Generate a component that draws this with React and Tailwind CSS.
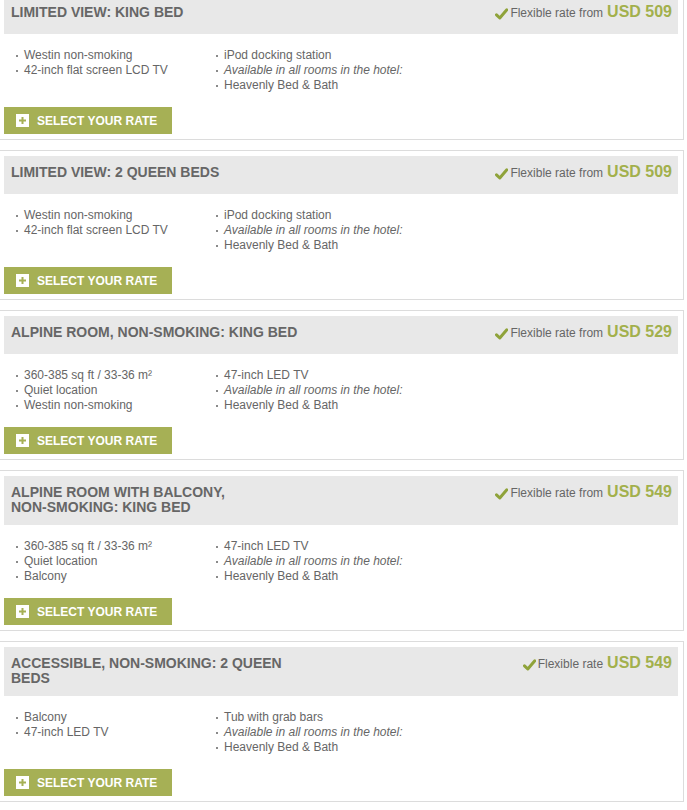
import React from 'react';

const AVAIL = 'Available in all rooms in the hotel:';

const rooms = [
  {
    title: 'LIMITED VIEW: KING BED',
    rate: 'Flexible rate from',
    price: 'USD 509',
    left: ['Westin non-smoking', '42-inch flat screen LCD TV'],
    right: ['iPod docking station', AVAIL, 'Heavenly Bed & Bath'],
  },
  {
    title: 'LIMITED VIEW: 2 QUEEN BEDS',
    rate: 'Flexible rate from',
    price: 'USD 509',
    left: ['Westin non-smoking', '42-inch flat screen LCD TV'],
    right: ['iPod docking station', AVAIL, 'Heavenly Bed & Bath'],
  },
  {
    title: 'ALPINE ROOM, NON-SMOKING: KING BED',
    rate: 'Flexible rate from',
    price: 'USD 529',
    left: ['360-385 sq ft / 33-36 m²', 'Quiet location', 'Westin non-smoking'],
    right: ['47-inch LED TV', AVAIL, 'Heavenly Bed & Bath'],
  },
  {
    title: 'ALPINE ROOM WITH BALCONY, NON-SMOKING: KING BED',
    rate: 'Flexible rate from',
    price: 'USD 549',
    left: ['360-385 sq ft / 33-36 m²', 'Quiet location', 'Balcony'],
    right: ['47-inch LED TV', AVAIL, 'Heavenly Bed & Bath'],
  },
  {
    title: 'ACCESSIBLE, NON-SMOKING: 2 QUEEN BEDS',
    rate: 'Flexible rate',
    price: 'USD 549',
    left: ['Balcony', '47-inch LED TV'],
    right: ['Tub with grab bars', AVAIL, 'Heavenly Bed & Bath'],
  },
];

function Check() {
  return (
    <svg width="13" height="12" viewBox="0 0 13 12" className="mr-[2px] self-center translate-y-[1px]">
      <path d="M1.5 6.8 L4.8 10 L11.8 1.8" fill="none" stroke="#8fa33a" strokeWidth="3" strokeLinecap="round" strokeLinejoin="round" />
    </svg>
  );
}

function Feature({ text }) {
  const italic = text === AVAIL;
  return (
    <li className="flex items-baseline h-[15px] leading-[15px]">
      <span className="w-[2px] h-[2px] bg-[#8a8a8a] mr-[6px] shrink-0 -translate-y-[2px]" />
      <span className={italic ? 'italic' : ''}>{text}</span>
    </li>
  );
}

// keep hyphenated words together, like the original page
function Title({ text }) {
  const words = text.split(' ');
  return (
    <h2 className="max-w-[300px] text-[14px] leading-[15px] font-bold text-[#666]">
      {words.map((w, i) => (
        <React.Fragment key={i}>
          <span className="whitespace-nowrap">{w}</span>
          {i < words.length - 1 ? ' ' : ''}
        </React.Fragment>
      ))}
    </h2>
  );
}

function RoomCard({ room }) {
  return (
    <div className="border border-[#dcdcdc] p-[5px] bg-white">
      {/* header */}
      <div className="bg-[#e8e8e8] flex items-baseline justify-between pl-[7px] pr-[6px] pt-[5px] pb-[10px]">
        <Title text={room.title} />
        <div className="flex items-baseline leading-[21px]">
          <Check />
          <span className="text-[12px] text-[#666]">{room.rate}</span>
          <span className="ml-[4px] text-[16px] font-bold text-[#a2b04c]">{room.price}</span>
        </div>
      </div>

      {/* features */}
      <div className="mt-[14px] pl-[12px] grid grid-cols-[200px_1fr] text-[12px] text-[#666]">
        <ul>
          {room.left.map((t) => (
            <Feature key={t} text={t} />
          ))}
        </ul>
        <ul>
          {room.right.map((t) => (
            <Feature key={t} text={t} />
          ))}
        </ul>
      </div>

      <button className="mt-[14px] w-[168px] h-[27px] bg-[#a6b055] flex items-center pl-[12px] text-white text-[12px] font-bold">
        <span className="w-[13px] h-[13px] bg-white flex items-center justify-center mr-[8px]">
          <svg width="9" height="9" viewBox="0 0 9 9">
            <path d="M4.5 1 V8 M1 4.5 H8" stroke="#a6b055" strokeWidth="2" />
          </svg>
        </span>
        SELECT YOUR RATE
      </button>
    </div>
  );
}

export default function App() {
  return (
    <div className="bg-white min-h-[810px] overflow-hidden font-['Liberation_Sans',Arial,sans-serif]">
      <div className="-mt-[10px] ml-[-2px] w-[686px] flex flex-col gap-[10px]">
        {rooms.map((r) => (
          <RoomCard key={r.title} room={r} />
        ))}
      </div>
    </div>
  );
}
